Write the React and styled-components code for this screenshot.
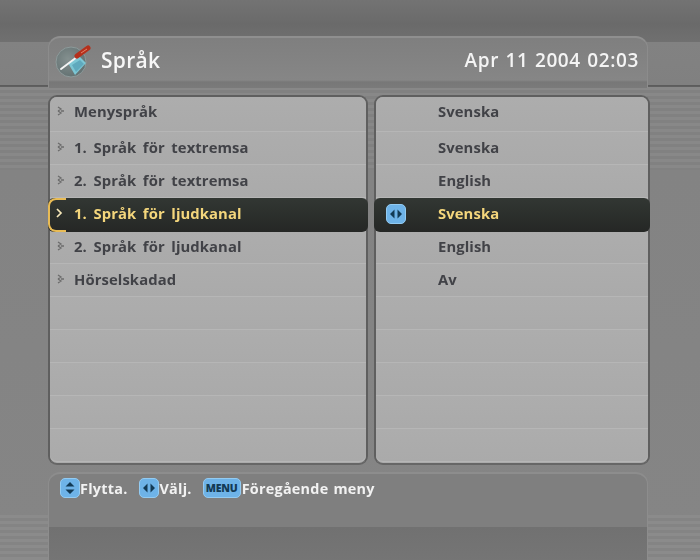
import React from 'react';
import styled, { createGlobalStyle } from 'styled-components';

const Global = createGlobalStyle`
  html, body { margin: 0; padding: 0; background: #7c7c7c; }
  body { font-family: "Open Sans", "Noto Sans", sans-serif; }
`;

const Screen = styled.div`
  width: 700px;
  height: 560px;
  overflow: hidden;
  box-sizing: border-box;
  padding: 36px 50px 0 48px;
  background:
    linear-gradient(180deg, #737373 0, #6a6a6a 24px, #707070 42px, transparent 42px),
    linear-gradient(180deg, transparent 85px, #5a5a5a 85px, #626262 87px, transparent 87px),
    repeating-linear-gradient(180deg, #888 0, #888 3px, #818181 3px, #818181 6px) 0 87px / 100% 83px no-repeat,
    repeating-linear-gradient(180deg, #8b8b8b 0, #8b8b8b 3px, #848484 3px, #848484 6px) 0 515px / 100% 45px no-repeat,
    linear-gradient(180deg, #828282 42px, #808080 85px, #838383 170px, #858585 530px);
`;

const Header = styled.header`
  height: 52px;
  margin-right: 2px;
  box-sizing: border-box;
  display: flex;
  align-items: center;
  padding: 0 8px 6px 6px;
  border-radius: 12px 12px 0 0;
  border-top: 2px solid #8f8f8f;
  border-left: 1px solid #8c8c8c;
  border-right: 1px solid #8c8c8c;
  background: linear-gradient(180deg, #7f7f7f 0, #868686 42px, #777 44px, #7b7b7b 52px);
`;

const Title = styled.h1`
  margin: 0 0 0 10px;
  flex: 1;
  color: #f7f7f7;
  font-size: 21px;
  font-weight: 600;
  letter-spacing: 0.3px;
  filter: blur(0.3px);
`;

const Clock = styled.div`
  color: #f4f4f4;
  font-size: 19px;
  font-weight: 600;
  letter-spacing: 0.6px;
  word-spacing: 1px;
  filter: blur(0.3px);
`;

const Panels = styled.main`
  display: grid;
  grid-template-columns: 320px 276px;
  gap: 6px;
  margin-top: 7px;
  height: 370px;
`;

const Panel = styled.section`
  box-sizing: border-box;
  border: 2px solid #5f5f5f;
  border-bottom-color: #666;
  border-radius: 9px;
  background: #ababab;
  display: flex;
  flex-direction: column;
`;

const Row = styled.div`
  flex: none;
  box-sizing: border-box;
  height: ${({ $first }) => ($first ? '35px' : '33px')};
  display: flex;
  align-items: center;
  padding-left: ${({ $indent }) => $indent}px;
  padding-bottom: ${({ $first }) => ($first ? '6px' : '3px')};
  border-bottom: 1px solid #b6b6b6;
  border-radius: ${({ $first, $last }) => ($first ? '7px 7px 0 0' : $last ? '0 0 7px 7px' : '0')};
  background: linear-gradient(180deg, #adadad, #aaa);
  font-size: 14.8px;
  font-weight: 700;
  letter-spacing: 0.1px;
  word-spacing: 2.6px;
  color: #414247;
  position: relative;

  ${({ $active }) => $active && `
    margin: 0 -2px -1px;
    height: 34px;
    padding-bottom: 4px;
    border-bottom: 0;
    background: linear-gradient(180deg, #323733, #252725);
    color: #f4d67c;
    border-radius: 6px;
    z-index: 1;
  `}
`;

const RowText = styled.span`
  filter: blur(0.25px);
`;

const Chevron = styled.svg`
  width: 8px;
  height: 10px;
  margin-right: ${({ $active }) => ($active ? '11px' : '9px')};
  flex: none;
`;

/* yellow bracket around the arrow of the selected row */
const Cursor = styled.span`
  position: absolute;
  left: 0;
  top: 0;
  bottom: 0;
  width: 18px;
  box-sizing: border-box;
  border: 2px solid #e8bb55;
  border-right: 0;
  border-radius: 8px 0 0 8px;
`;

const KeyIcon = styled.span`
  flex: none;
  display: inline-flex;
  align-items: center;
  justify-content: center;
  box-sizing: border-box;
  width: ${({ $wide }) => ($wide ? '38px' : '20px')};
  height: 20px;
  border-radius: 5px;
  background: #6eb3e8;
  border: 1px solid #93cbf2;
  color: #123a55;
  font-size: 10.5px;
  font-weight: 800;
  letter-spacing: -0.2px;
`;

const RowKey = styled(KeyIcon)`
  position: absolute;
  left: 12px;
  top: 6px;
`;

const Footer = styled.footer`
  margin: 7px 2px 0 0;
  height: 88px;
  box-sizing: border-box;
  border-radius: 12px 12px 0 0;
  border-top: 2px solid #8d8d8d;
  border-left: 1px solid #8d8d8d;
  border-right: 1px solid #8d8d8d;
  padding: 4px 0 0 11px;
  background: linear-gradient(180deg, #7f7f7f 0, #7f7f7f 53px, #717171 53px, #757575 88px);
`;

const Legend = styled.div`
  display: flex;
  align-items: center;
  color: #f2f2f2;
  font-size: 14.4px;
  font-weight: 700;
  letter-spacing: 0.25px;
  word-spacing: 1px;
`;

const LegendText = styled.span`
  margin: 0 ${({ $gap }) => $gap || 0}px 0 ${({ $tight }) => ($tight ? 0 : 1)}px;
  filter: blur(0.25px);
`;

const Arrows = ({ vertical }) => (
  <svg width="14" height="14" viewBox="0 0 14 14">
    {vertical
      ? <path d="M7 1 L11.5 5.5 H2.5 Z M7 13 L11.5 8.5 H2.5 Z" fill="#123a55" />
      : <path d="M1 7 L5.5 2.5 V11.5 Z M13 7 L8.5 2.5 V11.5 Z" fill="#123a55" />}
  </svg>
);

const Arrow = ({ active }) => (
  <Chevron viewBox="0 0 8 10" $active={active}>
    <path
      d={active ? 'M2 1 L6 5 L2 9' : 'M1 1 L4 3 L1 5 M4 5 L7 5 M1 5 L4 7 L1 9'}
      fill="none"
      stroke={active ? '#f6e7b8' : '#6c6c6c'}
      strokeWidth={active ? 1.7 : 1.3}
    />
  </Chevron>
);

const SettingsIcon = () => (
  <svg width="36" height="36" viewBox="0 0 36 36">
    <defs>
      <radialGradient id="disc" cx="0.4" cy="0.4" r="0.7">
        <stop offset="0" stopColor="#84908f" />
        <stop offset="1" stopColor="#5f6d6e" />
      </radialGradient>
    </defs>
    <circle cx="16" cy="20" r="15" fill="url(#disc)" stroke="#8d9a9a" strokeWidth="1" />
    <path d="M13 21 L24 14 L31 21 L20 33 Z" fill="#7cc6d4" />
    <path d="M17 23 L25 18 L29 22 L21 30 Z" fill="#5fa9bd" />
    <path d="M6 27 L22 15" stroke="#f4f4f4" strokeWidth="2" strokeLinecap="round" />
    <path d="M22 14 L33 6" stroke="#b5301c" strokeWidth="5" strokeLinecap="round" />
    <path d="M26 11 L32 7" stroke="#e8826a" strokeWidth="1" />
  </svg>
);

const labels = [
  'Menyspråk',
  '1. Språk för textremsa',
  '2. Språk för textremsa',
  '1. Språk för ljudkanal',
  '2. Språk för ljudkanal',
  'Hörselskadad',
];
const values = ['Svenska', 'Svenska', 'English', 'Svenska', 'English', 'Av'];
const ROWS = 11;
const ACTIVE = 3;

const rowsOf = (items, renderRow) =>
  Array.from({ length: ROWS }, (_, i) => renderRow(items[i], i));

export default function App() {
  return (
    <Screen>
      <Global />
      <Header>
        <SettingsIcon />
        <Title>Språk</Title>
        <Clock>Apr 11 2004 02:03</Clock>
      </Header>
      <Panels>
        <Panel>
          {rowsOf(labels, (label, i) => (
            <Row key={i} $first={i === 0} $last={i === ROWS - 1} $active={i === ACTIVE} $indent={7}>
              {i === ACTIVE && <Cursor />}
              {label && <Arrow active={i === ACTIVE} />}
              {label && <RowText>{label}</RowText>}
            </Row>
          ))}
        </Panel>
        <Panel>
          {rowsOf(values, (value, i) => (
            <Row key={i} $first={i === 0} $last={i === ROWS - 1} $active={i === ACTIVE} $indent={i === ACTIVE ? 64 : 62}>
              {i === ACTIVE && <RowKey><Arrows /></RowKey>}
              {value && <RowText>{value}</RowText>}
            </Row>
          ))}
        </Panel>
      </Panels>
      <Footer>
        <Legend>
          <KeyIcon><Arrows vertical /></KeyIcon>
          <LegendText $gap={11} $tight>Flytta.</LegendText>
          <KeyIcon><Arrows /></KeyIcon>
          <LegendText $gap={11}>Välj.</LegendText>
          <KeyIcon $wide>MENU</KeyIcon>
          <LegendText>Föregående meny</LegendText>
        </Legend>
      </Footer>
    </Screen>
  );
}
